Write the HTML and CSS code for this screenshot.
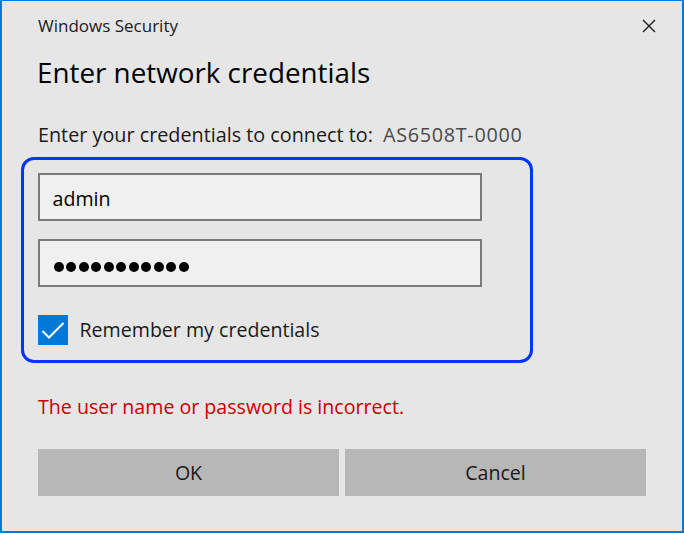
FILE: index.html
```html
<!DOCTYPE html>
<html>
<head>
<meta charset="utf-8">
<link rel="stylesheet" href="styles.css">
</head>
<body>
<div class="window">
  <div class="titlebar">
    <span class="title">Windows Security</span>
    <svg class="close" width="14" height="14" viewBox="0 0 14 14"><path d="M1 1 L13 13 M13 1 L1 13" stroke="#1a1a1a" stroke-width="1.4" fill="none"/></svg>
  </div>
  <h1 class="heading">Enter network credentials</h1>
  <div class="subtitle"><span>Enter your credentials to connect to:</span><span class="host">AS6508T-0000</span></div>
  <div class="highlight">
    <div class="field">admin</div>
    <div class="field password">
      <span class="dot"></span><span class="dot"></span><span class="dot"></span><span class="dot"></span><span class="dot"></span><span class="dot"></span><span class="dot"></span><span class="dot"></span><span class="dot"></span><span class="dot"></span><span class="dot"></span>
    </div>
    <div class="check-row">
      <span class="checkbox"><svg width="30" height="30" viewBox="0 0 30 30"><path d="M4.5 16 L11 22.5 L25.5 8" stroke="#fff" stroke-width="2" fill="none"/></svg></span>
      <span class="check-label">Remember my credentials</span>
    </div>
  </div>
  <div class="error">The user name or password is incorrect.</div>
  <div class="buttons">
    <div class="btn">OK</div>
    <div class="btn">Cancel</div>
  </div>
</div>
</body>
</html>
```
FILE: styles.css
```css
html, body {
  margin: 0;
  padding: 0;
  background: #e6e6e6;
}
.window {
  box-sizing: border-box;
  width: 684px;
  height: 533px;
  background: #e6e6e6;
  border: 2px solid #0078d7;
  border-top-width: 1px;
  padding: 0 36px;
  font-family: "Open Sans", "Noto Sans", sans-serif;
  color: #1a1a1a;
  display: flex;
  flex-direction: column;
}
.titlebar {
  display: flex;
  align-items: center;
  justify-content: space-between;
  height: 50px;
}
.title {
  font-size: 17px;
  line-height: 22px;
  margin-top: -1px;
}
.close {
  margin-right: -10px;
  margin-top: 0;
}
.heading {
  margin: 4px 0 0 -1px;
  font-weight: normal;
  font-size: 27.8px;
  line-height: 34px;
  color: #000;
}
.subtitle {
  margin-top: 34px;
  font-size: 19.8px;
  line-height: 24px;
  display: flex;
  gap: 10px;
  color: #1a1a1a;
}
.host {
  color: #4a4a4a;
  letter-spacing: 0.7px;
}
.highlight {
  margin: 10px 0 0 -17px;
  width: 512px;
  height: 206px;
  flex: none;
  box-sizing: border-box;
  border: 3.5px solid #0033ff;
  border-radius: 13px;
  padding: 13px 0 0 13.5px;
  display: flex;
  flex-direction: column;
}
.field {
  box-sizing: border-box;
  width: 444px;
  height: 48px;
  flex: none;
  border: 2px solid #7a7a7a;
  background: #f0f0f0;
  padding: 3px 0 0 13px;
  font-size: 19.6px;
  display: flex;
  align-items: center;
  color: #000;
}
.password {
  margin-top: 18px;
  gap: 2.5px;
  padding-left: 14px;
}
.dot {
  width: 10px;
  height: 10px;
  border-radius: 50%;
  background: #000;
  margin-top: 4px;
}
.check-row {
  margin-top: 28px;
  display: flex;
  align-items: center;
  gap: 12px;
}
.checkbox {
  width: 30px;
  height: 30px;
  background: #0078d7;
  display: block;
}
.checkbox svg { display: block; }
.check-label {
  font-size: 19.6px;
  line-height: 24px;
  color: #1a1a1a;
}
.error {
  margin-top: 32px;
  font-size: 19.6px;
  line-height: 24px;
  color: #c80000;
}
.buttons {
  margin-top: 30px;
  display: flex;
  gap: 6px;
}
.btn {
  flex: 1;
  height: 47px;
  background: #b7b7b7;
  display: flex;
  align-items: center;
  justify-content: center;
  font-size: 19.6px;
  color: #1a1a1a;
}
```
